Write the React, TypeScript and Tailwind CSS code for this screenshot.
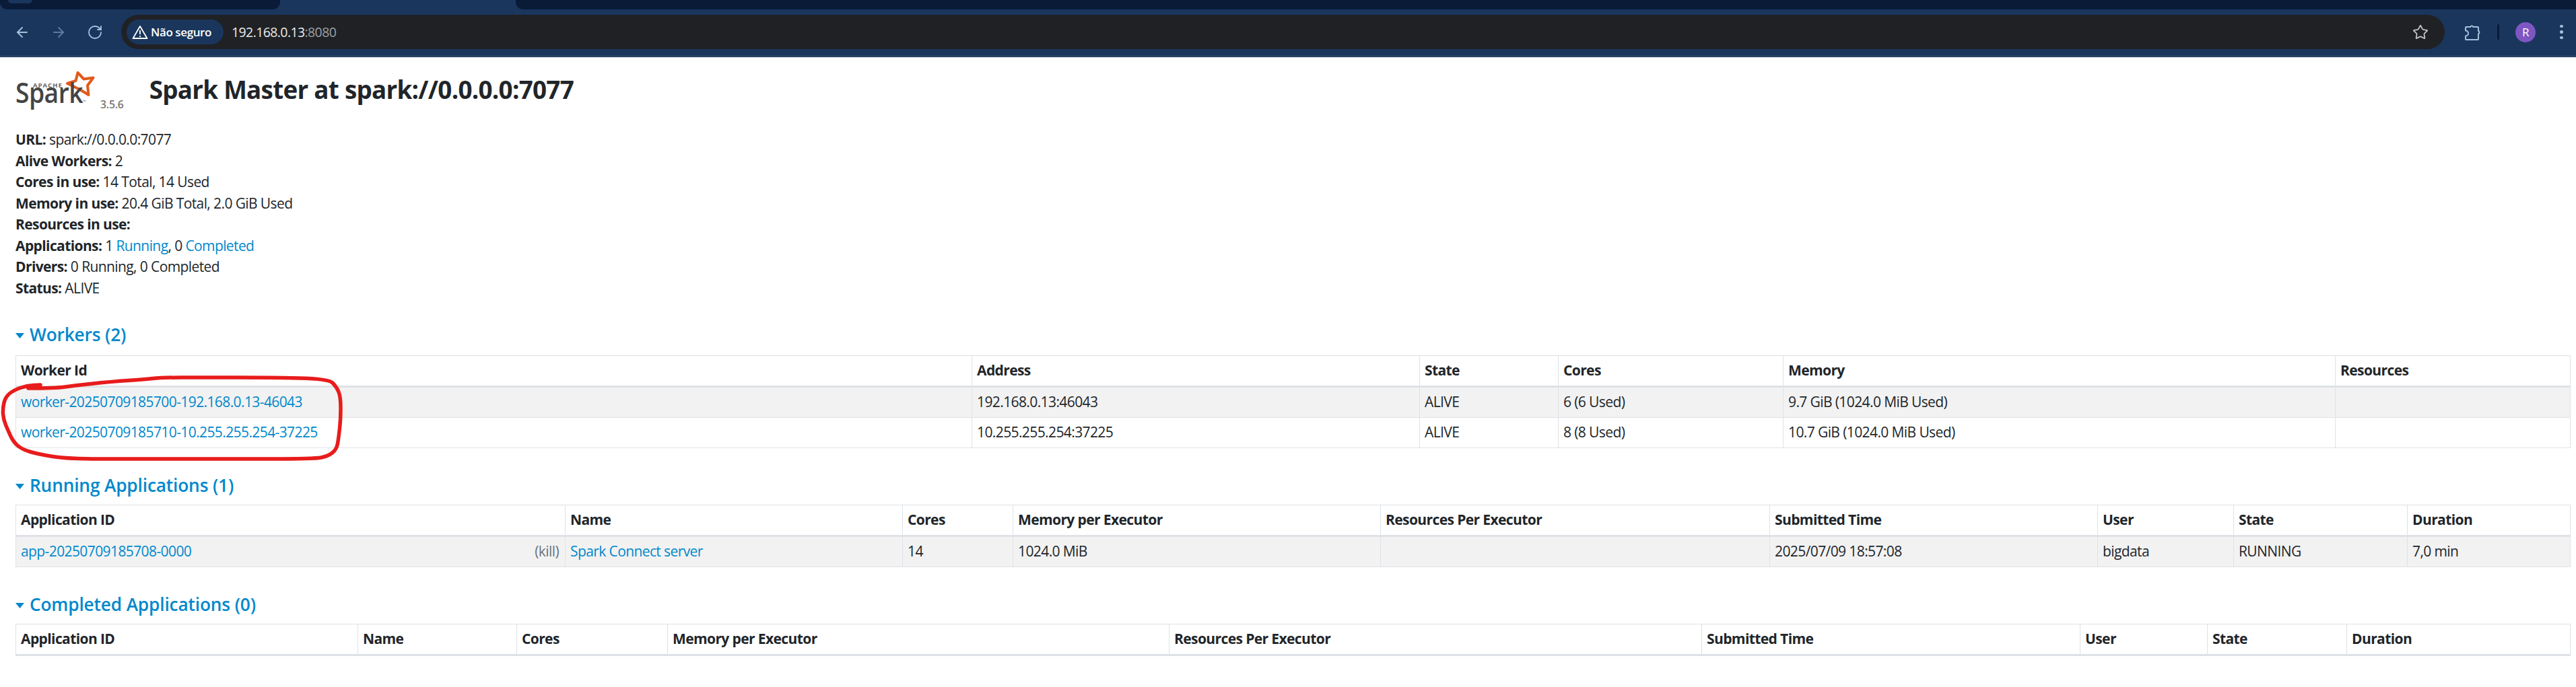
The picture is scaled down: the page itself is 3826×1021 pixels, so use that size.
import React from "react";
import { ArrowLeft, ArrowRight, RotateCw, Star } from "lucide-react";

const TH = "h-[47px] border-r border-b-[3px] border-r-[#dee2e6] border-b-[#dee2e6] px-[7px] text-left align-middle font-bold";
const TD = "h-[45px] border-r border-b border-[#dee2e6] px-[7px] text-left align-middle font-normal";
const LINK = "text-[#0088cc]";

function Caret() {
  return (
    <svg width="13" height="8" viewBox="0 0 13 8" className="mr-[8px] mt-[4px] shrink-0">
      <path d="M0 0H13L6.5 8Z" fill="#0088cc" />
    </svg>
  );
}

function Section({ title, mt, mb }: { title: string; mt: string; mb: string }) {
  return (
    <h4 className={`flex h-[32px] items-center text-[26.25px] font-semibold leading-[32px] text-[#0088cc] ${mt} ${mb}`}>
      <Caret />
      <span className="tracking-[-0.15px]">{title}</span>
    </h4>
  );
}

function Table({ cols, heads, children }: { cols: string[]; heads: string[]; children?: React.ReactNode }) {
  return (
    <table className="w-[3795px] table-fixed border-separate border-spacing-0 border-t border-l border-[#dee2e6]">
      <colgroup>
        {cols.map((c, i) => (
          <col key={i} className={c} />
        ))}
      </colgroup>
      <thead>
        <tr>
          {heads.map((h) => (
            <th key={h} className={TH}>
              {h}
            </th>
          ))}
        </tr>
      </thead>
      <tbody>{children}</tbody>
    </table>
  );
}

const redPoints: [number, number][] = [
  [42, 577], [83, 577], [110, 573], [167, 567], [213, 564], [240, 561], [300, 561], [400, 561], [488, 563],
  [500, 575], [506, 590], [506, 623], [503, 650], [500, 668], [487, 678], [467, 682], [333, 682], [200, 682],
  [100, 682], [57, 675], [33, 668], [20, 657], [12, 640], [5, 623], [4, 607], [8, 590], [20, 580], [40, 573], [60, 572],
];

function smooth(pts: [number, number][]) {
  let d = `M${pts[0][0]} ${pts[0][1]}`;
  for (let i = 1; i < pts.length - 1; i++) {
    const mx = (pts[i][0] + pts[i + 1][0]) / 2;
    const my = (pts[i][1] + pts[i + 1][1]) / 2;
    d += ` Q${pts[i][0]} ${pts[i][1]} ${mx} ${my}`;
  }
  const l = pts[pts.length - 1];
  return `${d} L${l[0]} ${l[1]}`;
}

function SparkLogo() {
  return (
    <svg width="120" height="70" viewBox="0 0 120 70" className="shrink-0">
      <path
        d="M92.5 8L101.5 17.5L115.5 15.5L107 27L108.5 41L96.5 33.5L77 24L89.5 20Z"
        fill="none"
        stroke="#e25a1c"
        strokeWidth="4"
        strokeLinejoin="round"
      />
      <text x="26" y="30" fontSize="9.5" fontWeight="700" fill="#666" letterSpacing="1" fontFamily="'Open Sans',sans-serif">
        APACHE
      </text>
      <text x="0" y="53" fontSize="41" fontWeight="600" fill="#444" textLength="100" lengthAdjust="spacingAndGlyphs" fontFamily="'Open Sans',sans-serif">
        Spark
      </text>
      <text x="100" y="53" fontSize="6" fill="#777" fontFamily="'Open Sans',sans-serif">
        ™
      </text>
    </svg>
  );
}

function Chrome() {
  return (
    <header className="font-['Open_Sans',sans-serif]">
      <div className="flex h-[14px] bg-[#1a365d]">
        <div className="h-[14px] w-[416px] rounded-b-[11px] bg-[#0a1b38] pl-[12px]">
          <div className="h-[5px] w-[36px] rounded-b-[6px] bg-[#1a365d]" />
        </div>
        <div className="w-[350px]" />
        <div className="h-[14px] flex-1 rounded-bl-[11px] bg-[#0a1b38]" />
      </div>
      <div className="flex h-[71px] items-center border-b border-b-[#12294a] bg-[#1a365d] pb-[3px] shadow-[inset_0_-1px_0_#3b5a82]">
        <div className="ml-[21px] flex w-[159px] items-center gap-[30px]">
          <ArrowLeft size={24} strokeWidth={1.8} className="text-[#a9c0dc]" />
          <ArrowRight size={24} strokeWidth={1.8} className="text-[#5f7b9e]" />
          <RotateCw size={24} strokeWidth={1.8} className="text-[#a9c0dc]" />
        </div>
        <div className="flex h-[51px] w-[3451px] items-center rounded-full bg-[#202124] pl-[8px] pr-[24px]">
          <div className="flex h-[37px] w-[144px] items-center rounded-full bg-[#1a365d] pl-[8px]">
            <svg width="24" height="22" viewBox="0 0 24 22" className="shrink-0">
              <path d="M12 2L22.5 20H1.5Z" fill="none" stroke="#fff" strokeWidth="1.8" strokeLinejoin="round" />
              <path d="M12 8V14M12 16V18" stroke="#fff" strokeWidth="1.8" />
            </svg>
            <span className="ml-[4px] whitespace-nowrap text-[17px] font-semibold tracking-[-0.4px] text-white">Não seguro</span>
          </div>
          <span className="ml-[12px] text-[19.5px] tracking-[-0.6px] text-[#e8eaed]">
            192.168.0.13<span className="text-[#9aa0a6]">:8080</span>
          </span>
          <Star size={24} strokeWidth={1.8} className="ml-auto text-[#c4c7c5]" />
        </div>
        <svg width="26" height="26" viewBox="0 0 26 26" className="ml-[28px] shrink-0 text-[#a9c0dc]">
          <path
            d="M3 6Q3 5 4 5H10A2.5 2.5 0 0 1 14.5 5H21Q22 5 22 6V11A2.5 2.5 0 0 1 22 15.5V23Q22 24 21 24H4Q3 24 3 23V18.5A4 4 0 0 0 3 10.5Z"
            fill="none"
            stroke="currentColor"
            strokeWidth="2"
            strokeLinejoin="round"
          />
        </svg>
        <div className="ml-[24px] h-[23px] w-[3px] rounded-full bg-[#0a1b38]" />
        <div className="ml-[24px] flex h-[30px] w-[30px] items-center justify-center rounded-full bg-[#7e57c2] text-[17px] text-white">R</div>
        <div className="ml-[36px] flex flex-col gap-[4px]">
          <div className="h-[4.5px] w-[4.5px] rounded-full bg-[#a9c0dc]" />
          <div className="h-[4.5px] w-[4.5px] rounded-full bg-[#a9c0dc]" />
          <div className="h-[4.5px] w-[4.5px] rounded-full bg-[#a9c0dc]" />
        </div>
      </div>
    </header>
  );
}

export default function App() {
  return (
    <div className="relative h-[1021px] w-[3826px] overflow-hidden bg-white font-['Open_Sans','Noto_Sans',sans-serif] text-[21px] leading-[31.5px] tracking-[-0.6px] text-[#212529]">
      <Chrome />
      <main className="pl-[23px] pr-[8px]">
        <div className="flex h-[107px] pt-[15px]">
          <SparkLogo />
          <span className="ml-[6px] mt-[42px] h-[26px] text-[15.75px] font-semibold leading-[26px] tracking-[-0.2px] text-[#777]">3.5.6</span>
          <h3 className="ml-[38px] mt-[11px] h-[44px] text-[36.75px] font-bold leading-[44px] tracking-[-0.7px]">Spark Master at spark://0.0.0.0:7077</h3>
        </div>
        <ul>
          <li><strong className="font-bold">URL:</strong> spark://0.0.0.0:7077</li>
          <li><strong className="font-bold">Alive Workers:</strong> 2</li>
          <li><strong className="font-bold">Cores in use:</strong> 14 Total, 14 Used</li>
          <li><strong className="font-bold">Memory in use:</strong> 20.4 GiB Total, 2.0 GiB Used</li>
          <li><strong className="font-bold">Resources in use:</strong></li>
          <li><strong className="font-bold">Applications:</strong> 1 <a className={LINK}>Running</a>, 0 <a className={LINK}>Completed</a></li>
          <li><strong className="font-bold">Drivers:</strong> 0 Running, 0 Completed</li>
          <li><strong className="font-bold">Status:</strong> ALIVE</li>
        </ul>

        <Section title="Workers (2)" mt="mt-[37px]" mb="mb-[15px]" />
        <Table
          cols={["w-[1420px]", "w-[665px]", "w-[206px]", "w-[334px]", "w-[820px]", "w-[349px]"]}
          heads={["Worker Id", "Address", "State", "Cores", "Memory", "Resources"]}
        >
          <tr className="bg-[#f2f2f2]">
            <td className={TD}><a className={LINK}>worker-20250709185700-192.168.0.13-46043</a></td>
            <td className={TD}>192.168.0.13:46043</td>
            <td className={TD}>ALIVE</td>
            <td className={TD}>6 (6 Used)</td>
            <td className={TD}>9.7 GiB (1024.0 MiB Used)</td>
            <td className={TD}></td>
          </tr>
          <tr>
            <td className={TD}><a className={LINK}>worker-20250709185710-10.255.255.254-37225</a></td>
            <td className={TD}>10.255.255.254:37225</td>
            <td className={TD}>ALIVE</td>
            <td className={TD}>8 (8 Used)</td>
            <td className={TD}>10.7 GiB (1024.0 MiB Used)</td>
            <td className={TD}></td>
          </tr>
        </Table>

        <Section title="Running Applications (1)" mt="mt-[39px]" mb="mb-[13px]" />
        <Table
          cols={["w-[816px]", "w-[501px]", "w-[164px]", "w-[546px]", "w-[578px]", "w-[487px]", "w-[202px]", "w-[258px]", "w-[242px]"]}
          heads={["Application ID", "Name", "Cores", "Memory per Executor", "Resources Per Executor", "Submitted Time", "User", "State", "Duration"]}
        >
          <tr className="bg-[#f2f2f2]">
            <td className={TD}>
              <a className={LINK}>app-20250709185708-0000</a>
              <span className="float-right mr-[2px] text-[#6c757d]">(kill)</span>
            </td>
            <td className={TD}><a className={LINK}>Spark Connect server</a></td>
            <td className={TD}>14</td>
            <td className={TD}>1024.0 MiB</td>
            <td className={TD}></td>
            <td className={TD}>2025/07/09 18:57:08</td>
            <td className={TD}>bigdata</td>
            <td className={TD}>RUNNING</td>
            <td className={TD}>7,0 min</td>
          </tr>
        </Table>

        <Section title="Completed Applications (0)" mt="mt-[39px]" mb="mb-[13px]" />
        <Table
          cols={["w-[508px]", "w-[236px]", "w-[224px]", "w-[745px]", "w-[791px]", "w-[562px]", "w-[189px]", "w-[207px]", "w-[332px]"]}
          heads={["Application ID", "Name", "Cores", "Memory per Executor", "Resources Per Executor", "Submitted Time", "User", "State", "Duration"]}
        />
      </main>
      <svg width="520" height="700" viewBox="0 0 520 700" className="pointer-events-none absolute left-0 top-0">
        <path d={smooth(redPoints)} fill="none" stroke="#e81c1c" strokeWidth="5.5" strokeLinecap="round" strokeLinejoin="round" />
      </svg>
    </div>
  );
}
